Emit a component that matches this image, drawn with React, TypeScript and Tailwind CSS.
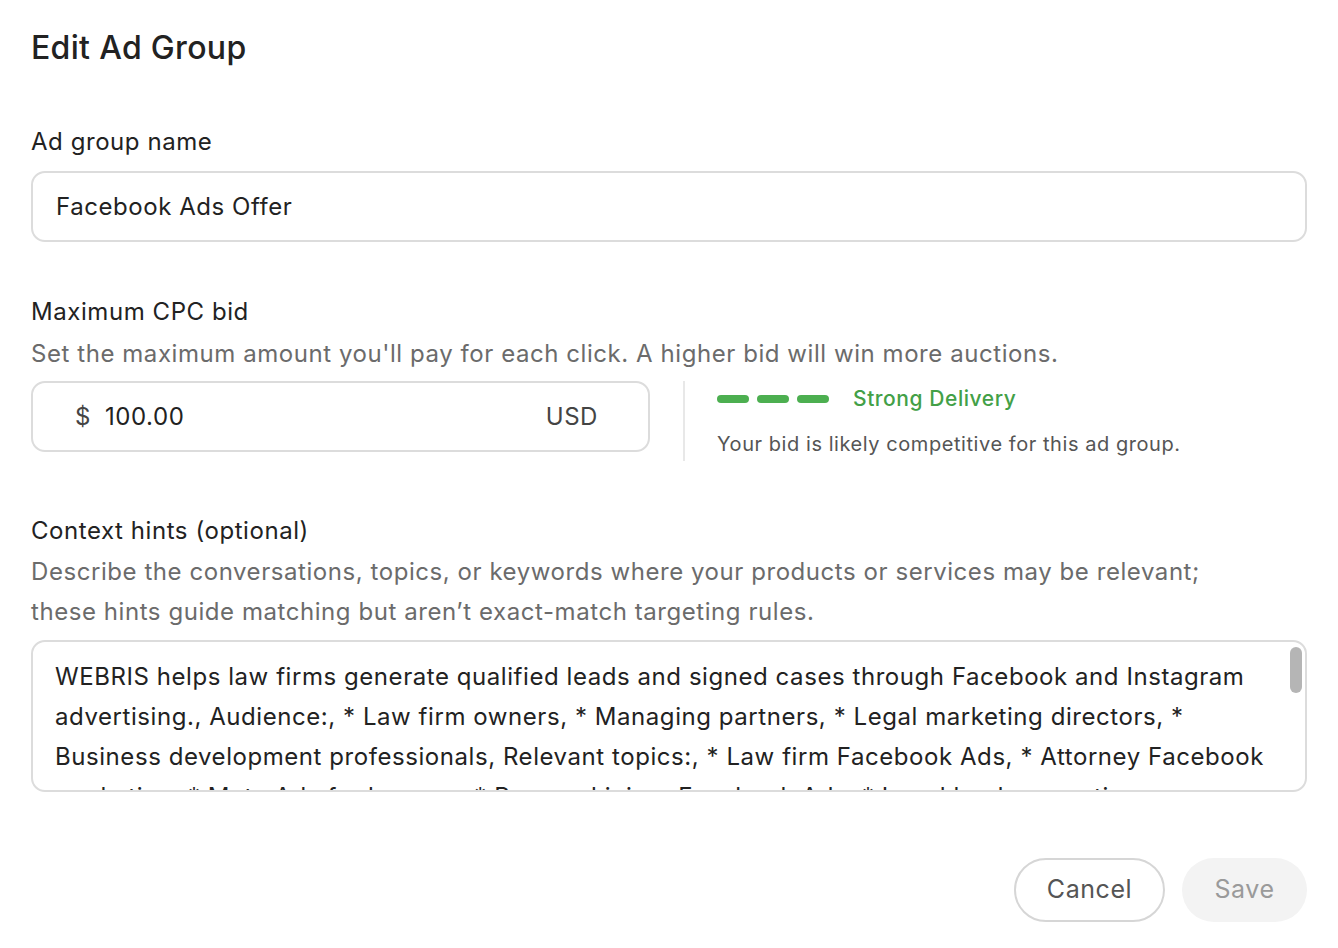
export default function App() {
  const text = "WEBRIS helps law firms generate qualified leads and signed cases through Facebook and Instagram advertising., Audience:, * Law firm owners, * Managing partners, * Legal marketing directors, * Business development professionals, Relevant topics:, * Law firm Facebook Ads, * Attorney Facebook marketing, * Meta Ads for lawyers, * Personal injury Facebook Ads, * Legal lead generation";
  return (
    <div className="w-[1338px] h-[948px] bg-white text-[#222] px-[31px] pt-[27px] tracking-[0.035em]" style={{ fontFamily: "Inter, 'Noto Sans', sans-serif" }}>
      <h1 className="text-[32px] leading-[42px] font-medium tracking-[0.01em]">Edit Ad Group</h1>
      <div className="mt-[57px] text-[24px] leading-[32px]">Ad group name</div>
      <div className="mt-[13px] h-[71px] border-2 border-[#dcdcdc] rounded-[14px] px-[23px] flex items-center text-[24px]">Facebook Ads Offer</div>
      <div className="mt-[54px] text-[24px] leading-[32px]">Maximum CPC bid</div>
      <div className="mt-[10px] text-[24px] leading-[32px] text-[#6b6b6b]">Set the maximum amount you'll pay for each click. A higher bid will win more auctions.</div>
      <div className="mt-[11px] flex items-start">
        <div className="w-[619px] h-[71px] border-2 border-[#dcdcdc] rounded-[14px] pl-[42px] pr-[50px] flex items-center text-[24px]">
          <span className="text-[#444]">$</span><span className="ml-[14px]">100.00</span><span className="ml-auto text-[#444]">USD</span>
        </div>
        <div className="ml-[33px] border-l-2 border-[#e8e8e8] h-[80px] pl-[32px]">
          <div className="flex items-center mt-[4px] h-[28px]">
            <span className="w-[32px] h-[8px] rounded-full bg-[#4caf50]"></span>
            <span className="ml-[8px] w-[32px] h-[8px] rounded-full bg-[#4caf50]"></span>
            <span className="ml-[8px] w-[32px] h-[8px] rounded-full bg-[#4caf50]"></span>
            <span className="ml-[24px] text-[21px] font-medium text-[#43a047]">Strong Delivery</span>
          </div>
          <div className="mt-[16px] text-[20px] text-[#555]">Your bid is likely competitive for this ad group.</div>
        </div>
      </div>
      <div className="mt-[54px] text-[24px] leading-[32px]">Context hints (optional)</div>
      <div className="mt-[5px] text-[24px] leading-[40px] text-[#6b6b6b]">Describe the conversations, topics, or keywords where your products or services may be relevant;<br />these hints guide matching but aren’t exact-match targeting rules.</div>
      <div className="relative mt-[8px] h-[152px] border-2 border-[#dcdcdc] rounded-[14px] overflow-hidden">
        <div className="pl-[22px] pr-[40px] pt-[15px] text-[24px] leading-[40px]">{text}</div>
        <div className="absolute right-[3px] top-[5px] w-[12px] h-[46px] rounded-full bg-[#b5b5b5]"></div>
      </div>
      <div className="mt-[66px] flex justify-end gap-[17px]">
        <button className="w-[151px] h-[64px] rounded-full border-2 border-[#d6d6d6] text-[25px] text-[#555]">Cancel</button>
        <button className="w-[125px] h-[64px] rounded-full bg-[#f3f3f3] text-[25px] text-[#9a9a9a]">Save</button>
      </div>
    </div>
  );
}
